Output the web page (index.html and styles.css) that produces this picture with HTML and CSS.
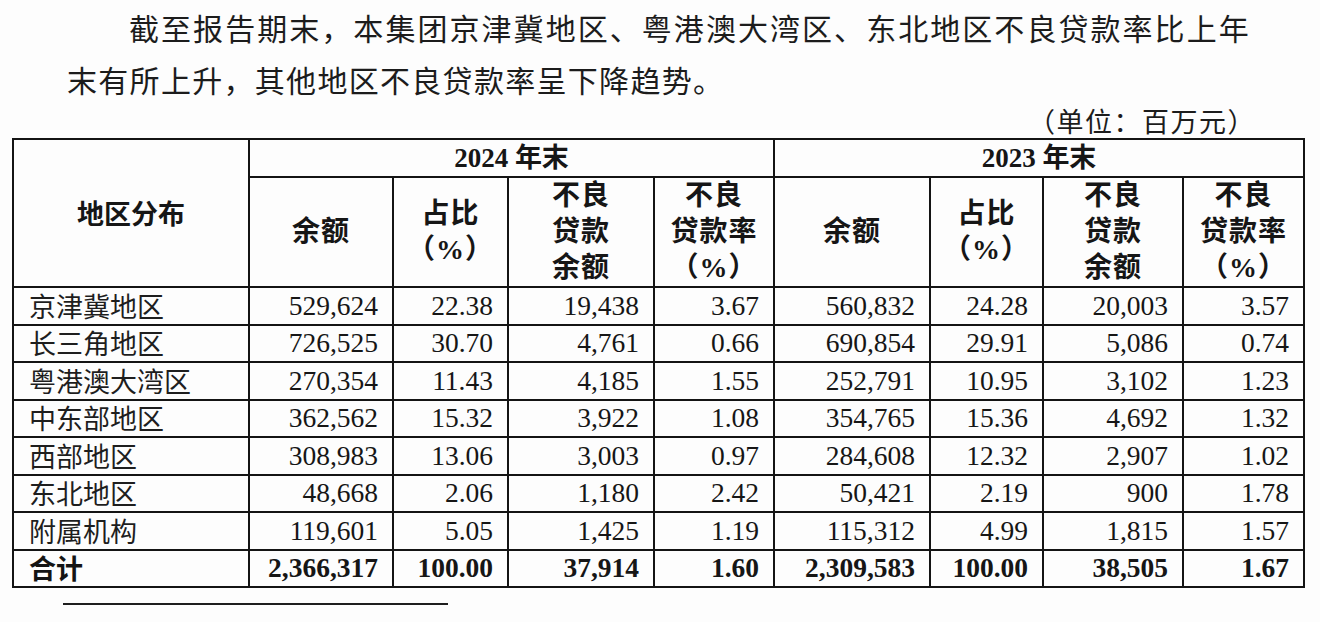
FILE: index.html
```html
<!DOCTYPE html>
<html lang="zh-CN">
<head>
<meta charset="utf-8">
<title>地区分布</title>
<link rel="stylesheet" href="styles.css">
</head>
<body>
<p class="intro">截至报告期末，本集团京津冀地区、粤港澳大湾区、东北地区不良贷款率比上年末有所上升，其他地区不良贷款率呈下降趋势。</p>
<div class="unit">（单位：百万元）</div>
<table class="npl">
  <colgroup>
    <col class="c-region">
    <col class="c-a1"><col class="c-a2"><col class="c-a3"><col class="c-a4">
    <col class="c-b1"><col class="c-b2"><col class="c-b3"><col class="c-b4">
  </colgroup>
  <thead>
    <tr class="year-row">
      <th rowspan="2" class="region-head">地区分布</th>
      <th colspan="4">2024 年末</th>
      <th colspan="4">2023 年末</th>
    </tr>
    <tr class="label-row">
      <th>余额</th>
      <th>占比<br>（%）</th>
      <th>不良<br>贷款<br>余额</th>
      <th>不良<br>贷款率<br>（%）</th>
      <th>余额</th>
      <th>占比<br>（%）</th>
      <th>不良<br>贷款<br>余额</th>
      <th>不良<br>贷款率<br>（%）</th>
    </tr>
  </thead>
  <tbody>
    <tr><td class="name">京津冀地区</td><td>529,624</td><td>22.38</td><td>19,438</td><td>3.67</td><td>560,832</td><td>24.28</td><td>20,003</td><td>3.57</td></tr>
    <tr><td class="name">长三角地区</td><td>726,525</td><td>30.70</td><td>4,761</td><td>0.66</td><td>690,854</td><td>29.91</td><td>5,086</td><td>0.74</td></tr>
    <tr><td class="name">粤港澳大湾区</td><td>270,354</td><td>11.43</td><td>4,185</td><td>1.55</td><td>252,791</td><td>10.95</td><td>3,102</td><td>1.23</td></tr>
    <tr><td class="name">中东部地区</td><td>362,562</td><td>15.32</td><td>3,922</td><td>1.08</td><td>354,765</td><td>15.36</td><td>4,692</td><td>1.32</td></tr>
    <tr><td class="name">西部地区</td><td>308,983</td><td>13.06</td><td>3,003</td><td>0.97</td><td>284,608</td><td>12.32</td><td>2,907</td><td>1.02</td></tr>
    <tr><td class="name">东北地区</td><td>48,668</td><td>2.06</td><td>1,180</td><td>2.42</td><td>50,421</td><td>2.19</td><td>900</td><td>1.78</td></tr>
    <tr><td class="name">附属机构</td><td>119,601</td><td>5.05</td><td>1,425</td><td>1.19</td><td>115,312</td><td>4.99</td><td>1,815</td><td>1.57</td></tr>
    <tr class="total"><td class="name">合计</td><td>2,366,317</td><td>100.00</td><td>37,914</td><td>1.60</td><td>2,309,583</td><td>100.00</td><td>38,505</td><td>1.67</td></tr>
  </tbody>
</table>
<div class="footnote-rule"></div>
</body>
</html>
```

FILE: styles.css
```css
html, body {
  margin: 0;
  padding: 0;
  background: #fdfdfd;
}

body {
  width: 1320px;
  height: 622px;
  overflow: hidden;
  color: #161616;
  font-family: "Liberation Serif", "Noto Sans CJK SC", serif;
}

.intro {
  margin: 0;
  padding: 1px 70px 0 67px;
  font-family: "Noto Sans CJK SC", sans-serif;
  font-size: 30px;
  letter-spacing: 1.3px;
  line-height: 52px;
  text-indent: 62px;
  text-align: justify;
  color: #1c1c1c;
}

.unit {
  padding-right: 64px;
  text-align: right;
  font-family: "Noto Sans CJK SC", sans-serif;
  font-size: 27px;
  letter-spacing: 1.5px;
  line-height: 32px;
  color: #1c1c1c;
}

.npl {
  margin: 1px 0 0 12px;
  width: 1293px;
  border-collapse: collapse;
  table-layout: fixed;
}

.c-region { width: 236px; }
.c-a1 { width: 144px; }
.c-a2 { width: 115px; }
.c-a3 { width: 146px; }
.c-a4 { width: 120px; }
.c-b1 { width: 156px; }
.c-b2 { width: 113px; }
.c-b3 { width: 140px; }
.c-b4 { width: 121px; }

.npl th,
.npl td {
  border: 2px solid #141414;
  padding: 0;
}

.npl th {
  font-weight: 700;
  font-size: 28px;
  letter-spacing: 1px;
  line-height: 36px;
  text-align: center;
  vertical-align: middle;
}

.year-row { height: 36px; }
.year-row th { letter-spacing: 0; font-size: 27px; }

.label-row { height: 109px; }

.region-head {
  font-family: "Noto Sans CJK SC", sans-serif;
  padding-bottom: 2px;
}

.npl td {
  height: 35.5px;
  font-size: 27.5px;
  line-height: 32px;
  text-align: right;
  padding-right: 14px;
  vertical-align: middle;
}

.npl td.name {
  text-align: left;
  padding: 0 0 0 15px;
  font-family: "Noto Sans CJK SC", sans-serif;
  font-size: 27px;
  color: #1e1e1e;
}

.total td {
  font-weight: 700;
}

.total td.name {
  color: #141414;
}

.footnote-rule {
  margin: 15px 0 0 63px;
  width: 385px;
  height: 2px;
  background: #1e1e1e;
}
```
